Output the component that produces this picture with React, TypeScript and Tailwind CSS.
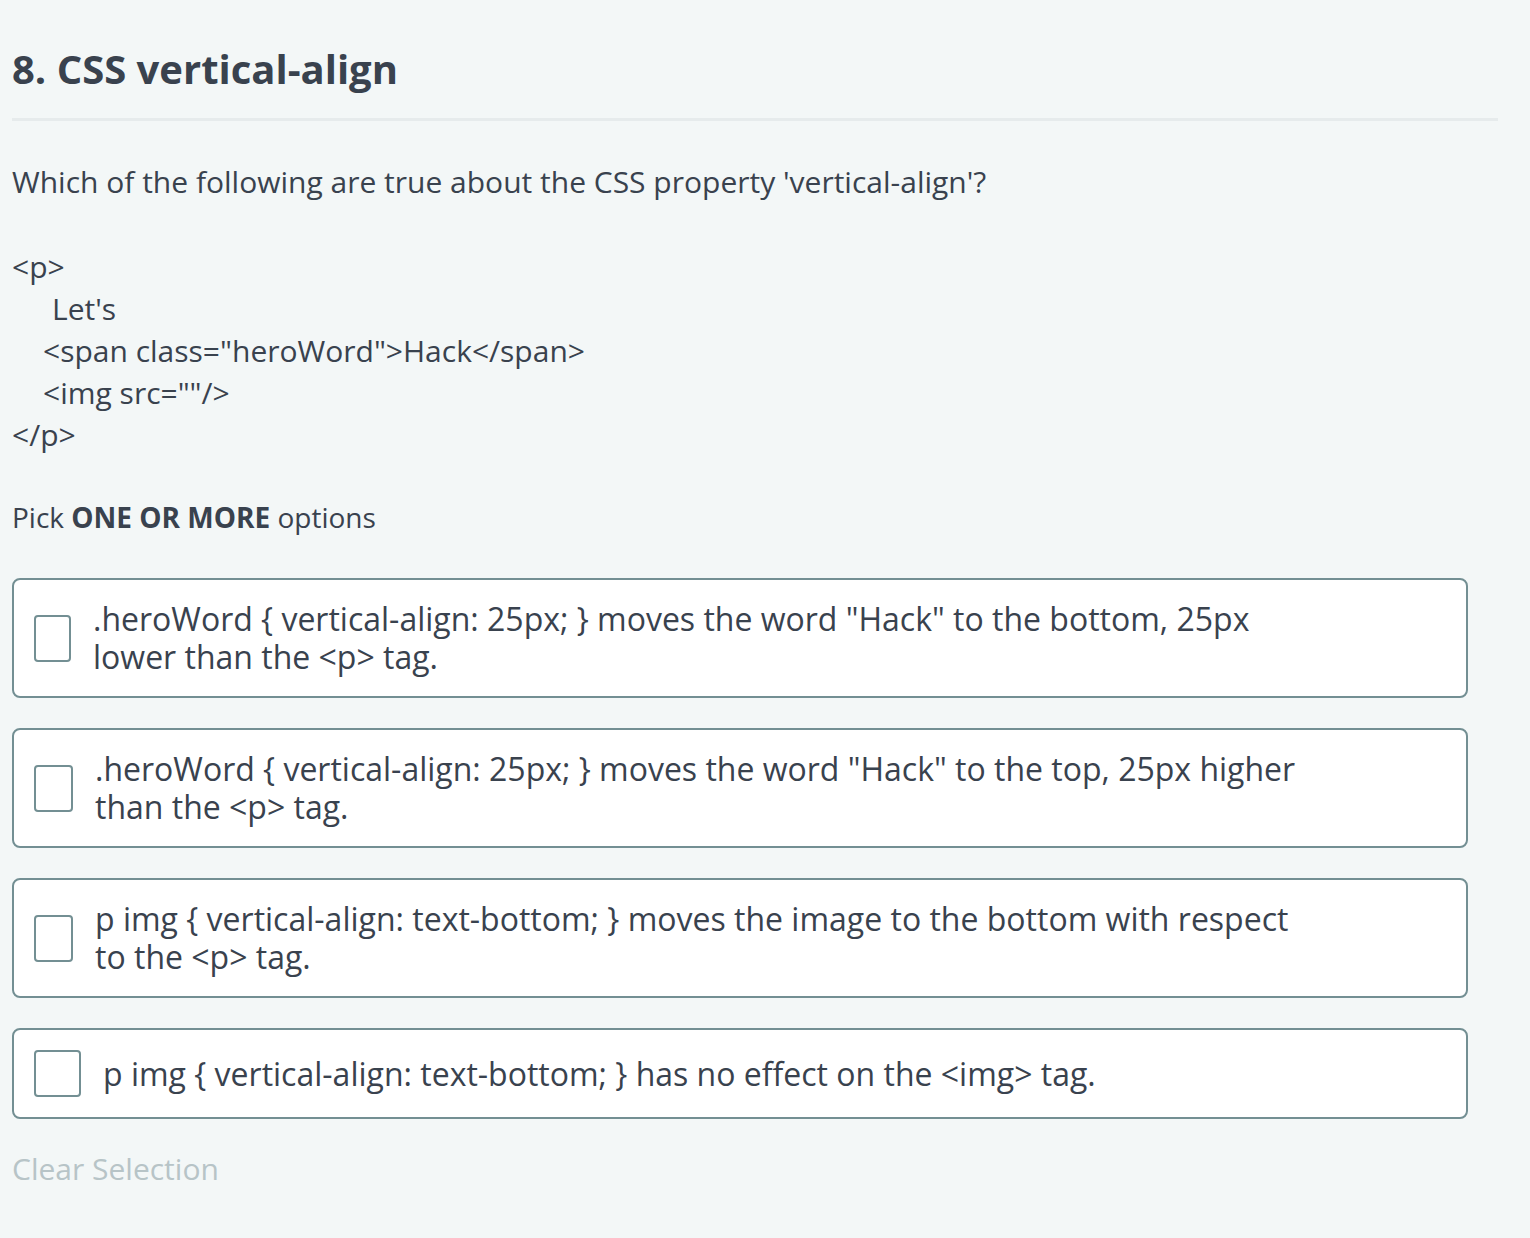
const options = [
    { text: '.heroWord { vertical-align: 25px; } moves the word "Hack" to the bottom, 25px lower than the <p> tag.', box: "w-[37px]" },
    { text: '.heroWord { vertical-align: 25px; } moves the word "Hack" to the top, 25px higher than the <p> tag.', box: "w-[39px]" },
    { text: "p img { vertical-align: text-bottom; } moves the image to the bottom with respect to the <p> tag.", box: "w-[39px]" },
    { text: "p img { vertical-align: text-bottom; } has no effect on the <img> tag.", box: "w-[47px]" },
];

const Option = ({ text, box }) => (
    <label className="flex items-center gap-[22px] bg-white border-2 border-[#738f93] rounded-[8px] px-[20px] py-[20px] cursor-pointer">
        <span className={`${box} h-[47px] shrink-0 border-2 border-[#738f93] rounded-[4px] bg-white`}></span>
        <span className="w-[1212px] text-[32px] leading-[38px]">{text}</span>
    </label>
);

export default function App() {
    return (
        <div className="min-h-[1238px] bg-[#f3f7f7] text-[#39424e] font-['Open_Sans',sans-serif]">
            <div className="w-[1486px] ml-[12px]">
                <h1 className="pt-[41px] pb-[21px] border-b-[3px] border-[#e6ebec] text-[40px] leading-[56px] font-bold">
                    8. CSS vertical-align
                </h1>
                <p className="mt-[40px] text-[30px] leading-[42px]">
                    Which of the following are true about the CSS property 'vertical-align'?
                </p>
                <div className="mt-[43px] text-[30px] leading-[42px]">
                    <div>{"<p>"}</div>
                    <div className="pl-[40px]">Let's</div>
                    <div className="pl-[31px]">{'<span class="heroWord">Hack</span>'}</div>
                    <div className="pl-[31px]">{'<img src=""/>'}</div>
                    <div>{"</p>"}</div>
                </div>
                <p className="mt-[40px] text-[28px] leading-[42px]">
                    Pick <strong className="font-bold">ONE OR MORE</strong> options
                </p>
                <div className="mt-[40px] w-[1456px] flex flex-col gap-[30px]">
                    {options.map((o, i) => (
                        <Option key={i} text={o.text} box={o.box} />
                    ))}
                </div>
                <div className="mt-[30px] text-[30px] leading-[40px] text-[#b7c4c7]">Clear Selection</div>
            </div>
        </div>
    );
}
